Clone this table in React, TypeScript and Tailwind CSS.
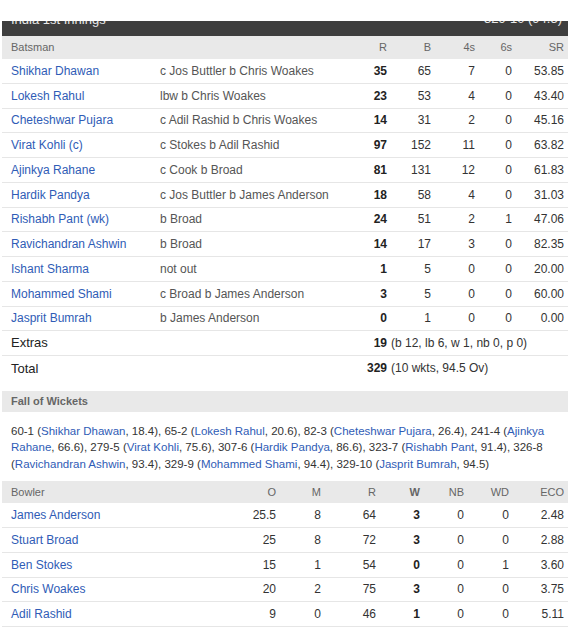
import React from 'react';

const FONT = { fontFamily: '"Liberation Sans", Arial, sans-serif' };

interface Batsman {
  name: string;
  howOut: string;
  r: number;
  b: number;
  fours: number;
  sixes: number;
  sr: string;
}

const batsmen: Batsman[] = [
  { name: 'Shikhar Dhawan', howOut: 'c Jos Buttler b Chris Woakes', r: 35, b: 65, fours: 7, sixes: 0, sr: '53.85' },
  { name: 'Lokesh Rahul', howOut: 'lbw b Chris Woakes', r: 23, b: 53, fours: 4, sixes: 0, sr: '43.40' },
  { name: 'Cheteshwar Pujara', howOut: 'c Adil Rashid b Chris Woakes', r: 14, b: 31, fours: 2, sixes: 0, sr: '45.16' },
  { name: 'Virat Kohli (c)', howOut: 'c Stokes b Adil Rashid', r: 97, b: 152, fours: 11, sixes: 0, sr: '63.82' },
  { name: 'Ajinkya Rahane', howOut: 'c Cook b Broad', r: 81, b: 131, fours: 12, sixes: 0, sr: '61.83' },
  { name: 'Hardik Pandya', howOut: 'c Jos Buttler b James Anderson', r: 18, b: 58, fours: 4, sixes: 0, sr: '31.03' },
  { name: 'Rishabh Pant (wk)', howOut: 'b Broad', r: 24, b: 51, fours: 2, sixes: 1, sr: '47.06' },
  { name: 'Ravichandran Ashwin', howOut: 'b Broad', r: 14, b: 17, fours: 3, sixes: 0, sr: '82.35' },
  { name: 'Ishant Sharma', howOut: 'not out', r: 1, b: 5, fours: 0, sixes: 0, sr: '20.00' },
  { name: 'Mohammed Shami', howOut: 'c Broad b James Anderson', r: 3, b: 5, fours: 0, sixes: 0, sr: '60.00' },
  { name: 'Jasprit Bumrah', howOut: 'b James Anderson', r: 0, b: 1, fours: 0, sixes: 0, sr: '0.00' },
];

const bowlers = [
  { name: 'James Anderson', o: '25.5', m: 8, r: 64, w: 3, nb: 0, wd: 0, eco: '2.48' },
  { name: 'Stuart Broad', o: '25', m: 8, r: 72, w: 3, nb: 0, wd: 0, eco: '2.88' },
  { name: 'Ben Stokes', o: '15', m: 1, r: 54, w: 0, nb: 0, wd: 1, eco: '3.60' },
  { name: 'Chris Woakes', o: '20', m: 2, r: 75, w: 3, nb: 0, wd: 0, eco: '3.75' },
  { name: 'Adil Rashid', o: '9', m: 0, r: 46, w: 1, nb: 0, wd: 0, eco: '5.11' },
];

const batGrid = 'grid grid-cols-[158px_188px_39px_44px_44px_37px_52px] items-center';
const bowlGrid = 'grid grid-cols-[200px_74px_45px_55px_44px_44px_45px_55px] items-center';

const Link = ({ children }: { children: React.ReactNode }) => (
  <span className="text-[#2f5cb6]">{children}</span>
);

export default function App() {
  return (
    <div className="w-[568px] h-[628px] overflow-hidden bg-white pl-[2px]" style={FONT}>
      <div className="h-[21px]" />

      {/* innings title bar, scrolled half out of view */}
      <div className="relative h-[15px] overflow-hidden bg-[#3e3e3e] text-[#e8e8e8]">
        <span className="absolute left-[9px] -top-[9px] text-[13px] leading-[15px]">India 1st Innings</span>
        <span className="absolute right-[6px] -top-[10px] text-[13px] leading-[15px]">329-10 (94.5)</span>
      </div>

      {/* batsmen */}
      <div className={`${batGrid} h-[23px] bg-[#e9e9e9] text-[11px] text-[#666]`}>
        <div className="pl-[9px]">Batsman</div>
        <div />
        <div className="text-right">R</div>
        <div className="text-right">B</div>
        <div className="text-right">4s</div>
        <div className="text-right">6s</div>
        <div className="text-right">SR</div>
      </div>
      {batsmen.map((p) => (
        <div key={p.name} className={`${batGrid} h-[24.75px] border-b border-[#e6e6e6] text-[12px]`}>
          <div className="pl-[9px] whitespace-nowrap">
            <Link>{p.name}</Link>
          </div>
          <div className="whitespace-nowrap text-[#555]">{p.howOut}</div>
          <div className="text-right font-bold text-[#222]">{p.r}</div>
          <div className="text-right text-[#333]">{p.b}</div>
          <div className="text-right text-[#333]">{p.fours}</div>
          <div className="text-right text-[#333]">{p.sixes}</div>
          <div className="text-right text-[#333]">{p.sr}</div>
        </div>
      ))}
      <div className={`${batGrid} h-[24.75px] border-b border-[#e6e6e6] text-[#222]`}>
        <div className="pl-[9px] text-[13px]">Extras</div>
        <div />
        <div className="text-right text-[12px] font-bold">19</div>
        <div className="col-span-4 pl-[4px] whitespace-nowrap text-[12px] text-[#333]">(b 12, lb 6, w 1, nb 0, p 0)</div>
      </div>
      <div className={`${batGrid} h-[24.75px] text-[#222]`}>
        <div className="pl-[9px] text-[13px]">Total</div>
        <div />
        <div className="text-right text-[12px] font-bold">329</div>
        <div className="col-span-4 pl-[4px] whitespace-nowrap text-[12px] text-[#333]">(10 wkts, 94.5 Ov)</div>
      </div>

      {/* fall of wickets */}
      <div className="mt-[10px] flex h-[21px] items-center bg-[#e9e9e9] pl-[9px] text-[11px] font-bold text-[#666]">
        Fall of Wickets
      </div>
      <div className="pl-[9px] pt-[11px] text-[11.5px] leading-[16.5px] text-[#333]">
        <div className="whitespace-nowrap">
          60-1 (<Link>Shikhar Dhawan</Link>, 18.4), 65-2 (<Link>Lokesh Rahul</Link>, 20.6), 82-3 (
          <Link>Cheteshwar Pujara</Link>, 26.4), 241-4 (<Link>Ajinkya</Link>
        </div>
        <div className="whitespace-nowrap">
          <Link>Rahane</Link>, 66.6), 279-5 (<Link>Virat Kohli</Link>, 75.6), 307-6 (<Link>Hardik Pandya</Link>
          , 86.6), 323-7 (<Link>Rishabh Pant</Link>, 91.4), 326-8
        </div>
        <div className="whitespace-nowrap">
          (<Link>Ravichandran Ashwin</Link>, 93.4), 329-9 (<Link>Mohammed Shami</Link>, 94.4), 329-10 (
          <Link>Jasprit Bumrah</Link>, 94.5)
        </div>
      </div>

      {/* bowlers */}
      <div className={`${bowlGrid} mt-[9px] h-[22px] bg-[#e9e9e9] text-[11px] text-[#666]`}>
        <div className="pl-[9px]">Bowler</div>
        <div className="text-right">O</div>
        <div className="text-right">M</div>
        <div className="text-right">R</div>
        <div className="text-right font-bold">W</div>
        <div className="text-right">NB</div>
        <div className="text-right">WD</div>
        <div className="text-right">ECO</div>
      </div>
      {bowlers.map((b) => (
        <div key={b.name} className={`${bowlGrid} h-[24.75px] border-b border-[#e6e6e6] text-[12px] text-[#333]`}>
          <div className="pl-[9px] whitespace-nowrap">
            <Link>{b.name}</Link>
          </div>
          <div className="text-right">{b.o}</div>
          <div className="text-right">{b.m}</div>
          <div className="text-right">{b.r}</div>
          <div className="text-right font-bold text-[#222]">{b.w}</div>
          <div className="text-right">{b.nb}</div>
          <div className="text-right">{b.wd}</div>
          <div className="text-right">{b.eco}</div>
        </div>
      ))}
    </div>
  );
}
